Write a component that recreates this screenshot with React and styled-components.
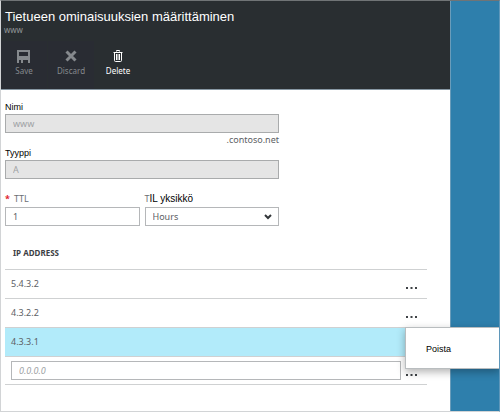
import React from "react";
import styled, { createGlobalStyle } from "styled-components";

const ui = '"Noto Sans", "Open Sans", sans-serif';
const arial = '"Liberation Sans", Arial, sans-serif';

const GlobalStyle = createGlobalStyle`
  *, *::before, *::after { box-sizing: border-box; }
  body { margin: 0; background: #fff; color: #5c6064; font: 9px/14px ${ui}; }
  h1, p { margin: 0; }
  button, input, select { font: inherit; color: inherit; }
`;

const Page = styled.div`
  display: flex;
  min-height: 100vh;
  border: 1px solid #d2d4d6;
  border-top-color: #707476;
  border-right-color: #5f97ba;
  overflow: hidden;
`;

const Blade = styled.main`
  flex: 1;
  min-width: 0;
`;

const Backdrop = styled.aside`
  flex: 0 0 49px;
  background: #2e7fac;
  border-left: 1px solid #6a9cba;
`;

const Header = styled.header`
  background: #292e31;
  border-bottom: 1px solid #8797a3;
  padding-top: 8px;
`;

const Title = styled.h1`
  padding-left: 4px;
  color: #fff;
  font: 13px/16px ${arial};
`;

const Subtitle = styled.p`
  padding-left: 3px;
  color: #929799;
  font-size: 8px;
  line-height: 10px;
`;

const Toolbar = styled.div`
  display: flex;
  gap: 1px;
  padding-top: 6px;
`;

const Command = styled.button`
  display: flex;
  flex-direction: column;
  align-items: center;
  gap: 2px;
  width: 46px;
  height: 48px;
  padding: 8px 0 0;
  border: 0;
  background: ${(p) => (p.disabled ? "#292c33" : "transparent")};
  color: ${(p) => (p.disabled ? "#85898d" : "#fff")};
  font-size: 8px;
  line-height: 12px;
`;

const Form = styled.form`
  padding: 10px 23px 0 4px;
`;

const Fields = styled.div`
  max-width: 274px;
`;

const Label = styled.label`
  display: block;
  color: #000;
  font: 9px/14px ${arial};
`;

const GreyLabel = styled.label`
  display: block;
  height: 16px;
  color: #6c7074;
  line-height: 16px;
`;

const Required = styled.span`
  color: #e0202c;
  font-weight: 700;
  margin-right: 4px;
`;

const Translated = styled.span`
  color: #000;
  font: 10px/16px ${arial};
`;

const TextBox = styled.input`
  display: block;
  width: 100%;
  height: 19px;
  padding: 0 7px;
  border: 1px solid #b5b7b9;
  border-radius: 0;
  background: #fff;
  &:disabled {
    background: #e5e5e5;
    border-color: #a9abac;
    color: #9fa2a4;
  }
  &::placeholder {
    color: #a0a3a5;
    font-style: italic;
    opacity: 1;
  }
`;

const Suffix = styled.p`
  padding-top: 1px;
  line-height: 12px;
  text-align: right;
`;

const FieldRow = styled.div`
  display: grid;
  grid-template-columns: 1fr 1fr;
  gap: 5px;
  padding-top: 12px;
`;

const SelectWrap = styled.div`
  display: grid;
  align-items: center;
  > * { grid-area: 1 / 1; }
  > svg { justify-self: end; margin-right: 7px; pointer-events: none; }
`;

const Select = styled.select`
  appearance: none;
  width: 100%;
  height: 19px;
  padding: 0 20px 0 7px;
  border: 1px solid #b5b7b9;
  border-radius: 0;
  background: #fff;
`;

const Table = styled.table`
  width: 100%;
  margin-top: 14px;
  border-collapse: separate;
  border-spacing: 0;
  table-layout: fixed;
`;

const Heading = styled.th`
  width: ${(p) => (p.$narrow ? "22px" : "auto")};
  height: 30px;
  padding: 0 8px 4px;
  border-bottom: 1px solid #cfd1d2;
  color: #3c4044;
  font-size: 8px;
  text-align: left;
`;

const Row = styled.tr`
  background: ${(p) => (p.$selected ? "#b2ebfa" : "transparent")};
`;

const Cell = styled.td`
  height: ${(p) => (p.$entry ? "28px" : "29px")};
  padding: 0 4px 0 6px;
  border-bottom: 1px solid #cfd1d2;
`;

const ActionCell = styled(Cell)`
  position: relative;
  padding: 4px 0 0;
`;

const MoreButton = styled.button`
  display: flex;
  width: 22px;
  height: 12px;
  padding: 0;
  border: 0;
  background: transparent;
  color: #3e4246;
`;

const Menu = styled.div`
  position: absolute;
  z-index: 1;
  top: -1px;
  left: 0;
  width: 95px;
  background: #fff;
  border: 1px solid #b9bdbf;
  border-right: 0;
  box-shadow: 0 3px 8px rgba(0, 0, 0, 0.3);
`;

const MenuItem = styled.button`
  display: block;
  width: 100%;
  height: 40px;
  padding: 2px 0 0 20px;
  border: 0;
  background: transparent;
  color: #000;
  font: 9px/14px ${arial};
  text-align: left;
`;

const SaveIcon = () => (
  <svg width="14" height="14" viewBox="0 0 14 14" fill="currentColor" aria-hidden="true">
    <path d="M0 1h13v13h-2v-3H6v3H4v-3H2v3H0zM2 3v4h9V3z" fillRule="evenodd" />
    <path d="M4 12h2v2H4zM11 11h2v3h-2z" />
  </svg>
);

const DiscardIcon = () => (
  <svg width="14" height="14" viewBox="0 0 14 14" stroke="currentColor" strokeWidth="3" aria-hidden="true">
    <path d="M2.5 2.5l9 9M11.5 2.5l-9 9" />
  </svg>
);

const DeleteIcon = () => (
  <svg width="14" height="14" viewBox="0 0 14 14" fill="none" stroke="currentColor" aria-hidden="true">
    <path d="M5.5 2.5v-1h3v1M2.5 3.5h9" />
    <path d="M3.5 3v8.5q0 1 1 1h5q1 0 1-1V3M5.5 5v6M7 5v6M8.5 5v6" />
  </svg>
);

const Chevron = () => (
  <svg width="8" height="6" viewBox="0 0 8 6" fill="none" stroke="#33373a" strokeWidth="2" aria-hidden="true">
    <path d="M1 1l3 3 3-3" />
  </svg>
);

const More = ({ label }) => (
  <MoreButton type="button" aria-label={label}>
    <svg width="14" height="12" viewBox="0 0 14 12" fill="currentColor" aria-hidden="true">
      <path d="M1 7h2v2H1zM5.5 7h2v2h-2zM10 7h2v2h-2z" />
    </svg>
  </MoreButton>
);

const commands = [
  { label: "Save", Icon: SaveIcon, disabled: true },
  { label: "Discard", Icon: DiscardIcon, disabled: true },
  { label: "Delete", Icon: DeleteIcon, disabled: false },
];

const addresses = ["5.4.3.2", "4.3.2.2", "4.3.3.1"];
const selected = "4.3.3.1";

export default function App() {
  return (
    <>
      <GlobalStyle />
      <Page>
        <Blade>
          <Header>
            <Title>Tietueen ominaisuuksien määrittäminen</Title>
            <Subtitle>www</Subtitle>
            <Toolbar>
              {commands.map(({ label, Icon, disabled }) => (
                <Command key={label} type="button" disabled={disabled}>
                  <Icon />
                  {label}
                </Command>
              ))}
            </Toolbar>
          </Header>
          <Form>
            <Fields>
              <Label htmlFor="name">Nimi</Label>
              <TextBox id="name" defaultValue="www" disabled />
              <Suffix>.contoso.net</Suffix>
              <Label htmlFor="type">Tyyppi</Label>
              <TextBox id="type" defaultValue="A" disabled />
              <FieldRow>
                <div>
                  <GreyLabel htmlFor="ttl">
                    <Required>*</Required>TTL
                  </GreyLabel>
                  <TextBox id="ttl" defaultValue="1" required />
                </div>
                <div>
                  <GreyLabel htmlFor="unit">
                    T<Translated>IL yksikkö</Translated>
                  </GreyLabel>
                  <SelectWrap>
                    <Select id="unit" defaultValue="Hours">
                      <option>Hours</option>
                    </Select>
                    <Chevron />
                  </SelectWrap>
                </div>
              </FieldRow>
            </Fields>
            <Table>
              <thead>
                <tr>
                  <Heading scope="col">IP ADDRESS</Heading>
                  <Heading $narrow aria-label="Actions" />
                </tr>
              </thead>
              <tbody>
                {addresses.map((ip) => (
                  <Row key={ip} $selected={ip === selected}>
                    <Cell>{ip}</Cell>
                    <ActionCell>
                      {ip === selected ? (
                        <Menu role="menu">
                          <MenuItem type="button" role="menuitem">Poista</MenuItem>
                        </Menu>
                      ) : (
                        <More label={`Actions for ${ip}`} />
                      )}
                    </ActionCell>
                  </Row>
                ))}
                <Row>
                  <Cell $entry>
                    <TextBox aria-label="IP address" placeholder="0.0.0.0" />
                  </Cell>
                  <ActionCell $entry>
                    <More label="Actions for new address" />
                  </ActionCell>
                </Row>
              </tbody>
            </Table>
          </Form>
        </Blade>
        <Backdrop />
      </Page>
    </>
  );
}
